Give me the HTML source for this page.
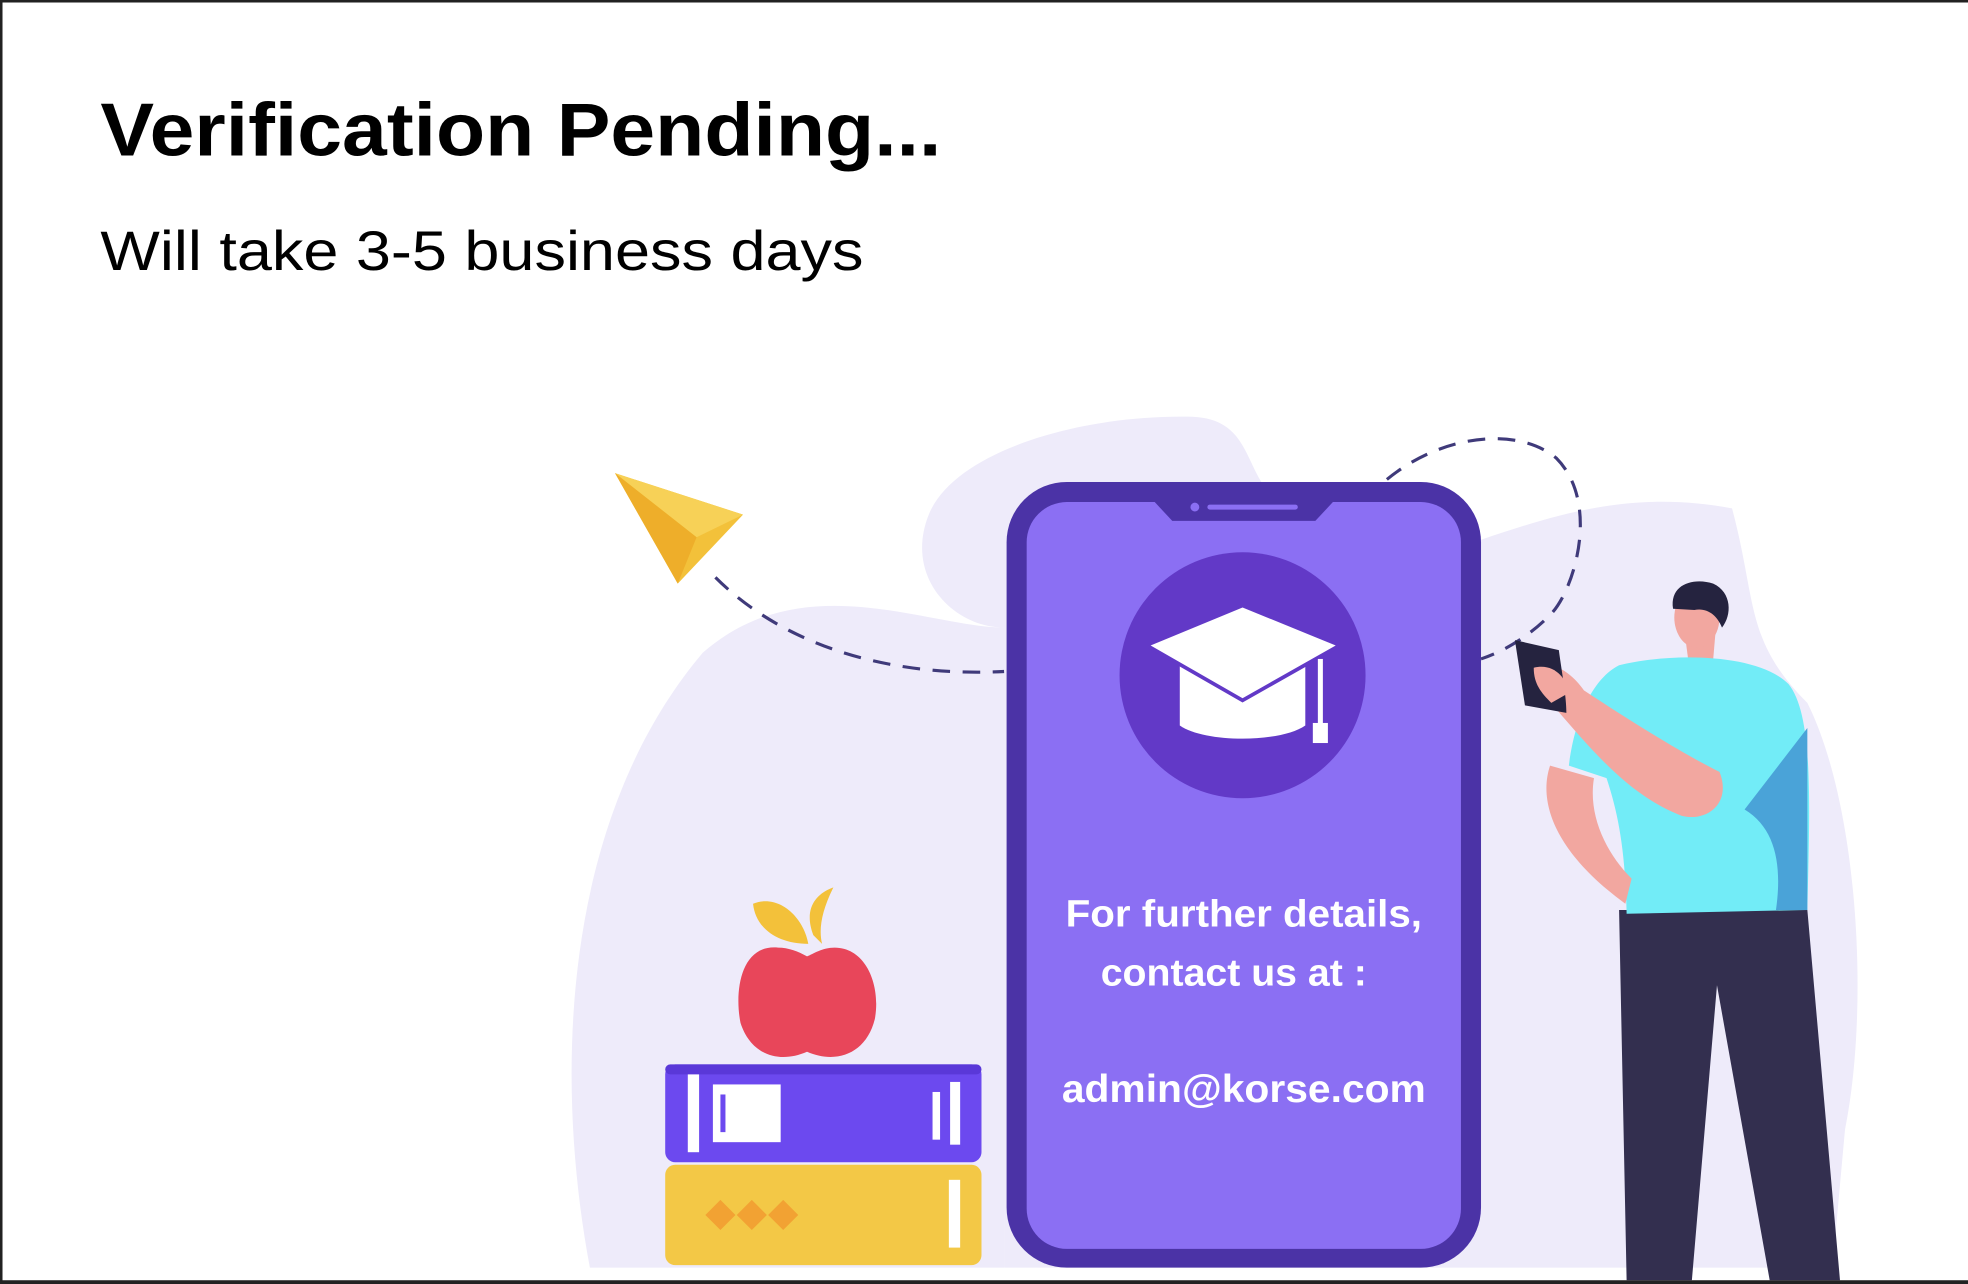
<!DOCTYPE html>
<html><head><meta charset="utf-8"><style>
html,body{margin:0;padding:0;background:#fff;}
svg{display:block;}
</style></head><body>
<svg width="1968" height="1284" viewBox="0 0 1568 1023" preserveAspectRatio="none" xmlns="http://www.w3.org/2000/svg">
<rect width="1568" height="1023" fill="#fff"/>
<rect x="0" y="0" width="1568" height="2" fill="#222"/>
<rect x="0" y="0" width="2" height="1023" fill="#222"/>
<rect x="0" y="1020" width="1568" height="3" fill="#222"/>
<text x="80" y="124" font-family="Liberation Sans, sans-serif" font-weight="bold" font-size="60" fill="#000" textLength="670" lengthAdjust="spacingAndGlyphs">Verification Pending...</text>
<text x="80" y="215" font-family="Liberation Sans, sans-serif" font-size="44" fill="#000" textLength="608" lengthAdjust="spacingAndGlyphs">Will take 3-5 business days</text>

<!-- background blobs -->
<path d="M470 1010 C440 850 450 650 560 520 C640 450 740 500 800 500 L800 1010 Z" fill="#eeebfa"/>
<path d="M740 410 C760 360 860 330 950 332 C1000 334 990 380 1020 400 L1180 430 C1240 410 1300 390 1380 405 C1400 480 1390 510 1440 560 C1480 640 1490 800 1470 900 L1460 1010 L800 1010 L800 500 C760 500 720 460 740 410 Z" fill="#eeebfa"/>

<!-- dashed paths -->
<path d="M570 460 C620 510 700 540 800 535" fill="none" stroke="#3f3a7a" stroke-width="2.5" stroke-dasharray="14 10"/>
<path d="M1105 382 C1150 345 1210 340 1240 365 C1275 400 1255 470 1235 490 C1215 510 1195 520 1180 525" fill="none" stroke="#3f3a7a" stroke-width="2.5" stroke-dasharray="14 10"/>

<!-- paper plane -->
<path d="M490 377 L592 410 L540 465 Z" fill="#f3c13a"/>
<path d="M490 377 L592 410 L555 428 Z" fill="#f7d157"/>
<path d="M490 377 L555 428 L540 465 Z" fill="#eeae2a"/>

<!-- phone -->
<rect x="802" y="384" width="378" height="626" rx="48" fill="#4b33a6"/>
<rect x="818" y="400" width="346" height="595" rx="32" fill="#8b6ff3"/>
<path d="M920 400 L1062 400 L1048 415 L934 415 Z" fill="#4b33a6"/>
<circle cx="952" cy="404" r="3.5" fill="#8b6ff3"/>
<rect x="962" y="402" width="72" height="4" rx="2" fill="#8b6ff3"/>
<circle cx="990" cy="538" r="98" fill="#6239c7"/>
<path d="M940 520 L940 578 C960 592 1020 592 1040 578 L1040 520 Z" fill="#fff"/>
<path d="M915 515 L990 484 L1066 515 L990 558 Z" fill="#fff"/>
<path d="M915 515 L990 558 L1066 515" fill="none" stroke="#6239c7" stroke-width="3"/>
<rect x="1050" y="525" width="4" height="57" fill="#fff"/>
<rect x="1046" y="576" width="12" height="16" fill="#fff"/>
<g font-family="Liberation Sans, sans-serif" font-weight="bold" fill="#fff" text-anchor="middle">
<text x="991" y="738" font-size="30" textLength="284" lengthAdjust="spacingAndGlyphs">For further details,</text>
<text x="983" y="785" font-size="30" textLength="212" lengthAdjust="spacingAndGlyphs">contact us at :</text>
<text x="991" y="878" font-size="31" textLength="290" lengthAdjust="spacingAndGlyphs">admin@korse.com</text>
</g>

<!-- books -->
<rect x="530" y="928" width="252" height="80" rx="8" fill="#f3c846"/>
<rect x="756" y="940" width="9" height="54" fill="#fff"/>
<path d="M562 968 l12 -12 l12 12 l-12 12 Z M587 968 l12 -12 l12 12 l-12 12 Z M612 968 l12 -12 l12 12 l-12 12 Z" fill="#f2a233"/>
<rect x="530" y="848" width="252" height="78" rx="8" fill="#6c49ef"/>
<rect x="530" y="848" width="252" height="8" rx="4" fill="#5a38d8"/>
<rect x="548" y="856" width="9" height="62" fill="#fff"/>
<rect x="568" y="864" width="54" height="46" fill="#fff"/>
<rect x="574" y="872" width="4" height="30" fill="#6c49ef"/>
<rect x="743" y="870" width="6" height="38" fill="#fff"/>
<rect x="757" y="862" width="8" height="50" fill="#fff"/>

<!-- apple -->
<path d="M648 745 C640 724 650 712 664 707 C655 725 652 740 655 752 Z" fill="#f3c13a"/>
<path d="M600 720 C620 712 640 730 644 752 C620 752 602 740 600 720 Z" fill="#f3c13a"/>
<path d="M620 755 C590 752 585 790 590 815 C598 840 620 848 643 838 C666 848 690 840 697 812 C702 785 690 755 665 755 C655 755 648 760 643 762 C636 758 628 755 620 755 Z" fill="#e8465a"/>

<!-- person -->
<path d="M1290 725 L1440 725 L1466 1020 L1410 1020 L1368 785 L1348 1020 L1296 1020 Z" fill="#332f4f"/>
<path d="M1340 487 L1345 525 L1365 525 L1368 490 Z" fill="#f2a7a0"/>
<ellipse cx="1352" cy="492" rx="18" ry="24" fill="#f2a7a0"/>
<path d="M1333 485 C1330 465 1350 460 1365 465 C1380 472 1380 490 1372 500 C1368 490 1360 484 1350 486 Z" fill="#25233f"/>
<path d="M1290 530 C1330 520 1400 520 1425 545 C1445 570 1442 640 1440 725 L1296 728 C1295 680 1290 650 1280 620 L1250 610 C1255 570 1270 540 1290 530 Z" fill="#72ecf7"/>
<path d="M1440 580 L1440 725 L1415 725 C1420 690 1415 660 1390 645 Z" fill="#4aa3d8"/>
<path d="M1235 610 C1225 640 1240 680 1295 720 L1300 700 C1280 680 1265 650 1270 620 Z" fill="#f2a7a0"/>
<path d="M1222 530 C1240 525 1255 540 1262 550 C1300 575 1340 600 1370 615 C1380 640 1360 655 1340 650 C1300 635 1270 600 1240 565 C1225 555 1218 540 1222 530 Z" fill="#f2a7a0"/>
<path d="M1207 510 L1242 518 C1245 540 1248 555 1248 568 L1215 562 Z" fill="#25233f"/>
<path d="M1222 532 C1238 528 1248 540 1250 552 L1236 560 C1228 552 1222 545 1222 532 Z" fill="#f2a7a0"/>
</svg>
</body></html>
